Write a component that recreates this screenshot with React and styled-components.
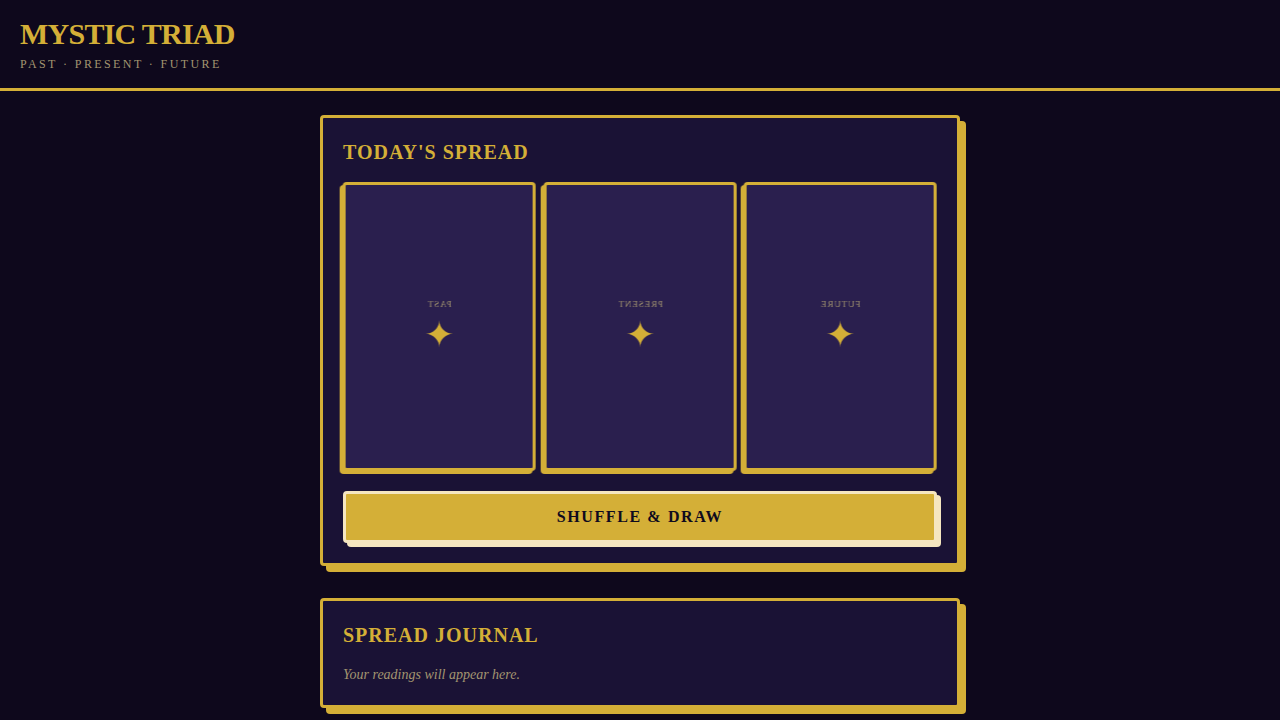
import styled, { createGlobalStyle } from "styled-components";

const POSITIONS = ["Past", "Present", "Future"];

const App = () => {
  return (
    <>
      <GlobalStyle />
      <Header>
        <h1>Mystic Triad</h1>
        <p>Past · Present · Future</p>
      </Header>

      <Main>
        <Panel>
          <PanelTitle>Today's Spread</PanelTitle>
          <Spread>
            {POSITIONS.map((position) => (
              <Card key={position}>
                <CardLabel>{position}</CardLabel>
                <CardSymbol>✦</CardSymbol>
              </Card>
            ))}
          </Spread>
          <DrawButton type="button">Shuffle &amp; Draw</DrawButton>
        </Panel>

        <Panel>
          <PanelTitle>Spread Journal</PanelTitle>
          <EmptyText>Your readings will appear here.</EmptyText>
        </Panel>
      </Main>
    </>
  );
};

const GlobalStyle = createGlobalStyle`
  * {
    box-sizing: border-box;
    margin: 0;
    padding: 0;
  }

  html {
    scrollbar-width: none;
  }

  body {
    background: #0e081c;
    color: #f5e6c0;
    font-family: "Liberation Serif", "DejaVu Sans", serif;
    line-height: 1.4;
  }
`;

const Header = styled.header`
  padding: 16px 20px;
  border-bottom: 3px solid #d4af37;

  h1 {
    color: #d4af37;
    font-size: 30px;
    line-height: 36px;
    letter-spacing: -0.025em;
    text-transform: uppercase;
  }

  p {
    margin-top: 4px;
    color: #a39570;
    font-size: 12px;
    line-height: 16px;
    letter-spacing: 0.2em;
    text-transform: uppercase;
  }
`;

const Main = styled.main`
  display: flex;
  flex-direction: column;
  gap: 32px;
  max-width: 640px;
  margin: 24px auto;
`;

const Panel = styled.section`
  padding: 20px;
  background: #1a1235;
  border: 3px solid #d4af37;
  border-radius: 4px;
  box-shadow: 6px 6px 0 #d4af37;
`;

const PanelTitle = styled.h2`
  margin-bottom: 16px;
  color: #d4af37;
  font-size: 20px;
  line-height: 28px;
  letter-spacing: 0.05em;
  text-transform: uppercase;
`;

const Spread = styled.div`
  display: grid;
  grid-template-columns: repeat(3, 1fr);
  gap: 8px;
  margin-bottom: 20px;
`;

const Card = styled.div`
  display: flex;
  flex-direction: column;
  align-items: center;
  justify-content: center;
  gap: 4px;
  aspect-ratio: 2 / 3;
  background: #2a1f4e;
  border: 3px solid #d4af37;
  border-radius: 4px;
  box-shadow: 3px 3px 0 #d4af37;
  transform: rotateY(180deg);
`;

const CardLabel = styled.span`
  color: #a39570;
  font-size: 9px;
  line-height: 13px;
  letter-spacing: 0.1em;
  text-transform: uppercase;
`;

const CardSymbol = styled.span`
  color: #d4af37;
  font-size: 36px;
  line-height: 40px;
`;

const DrawButton = styled.button`
  width: 100%;
  padding: 14px;
  background: #d4af37;
  color: #0f0a1e;
  border: 3px solid #f5e6c0;
  border-radius: 4px;
  box-shadow: 4px 4px 0 #f5e6c0;
  font-family: inherit;
  font-size: 16px;
  font-weight: 700;
  line-height: 18px;
  letter-spacing: 0.1em;
  text-transform: uppercase;
  cursor: pointer;
`;

const EmptyText = styled.p`
  color: #a39570;
  font-size: 14px;
  line-height: 20px;
  font-style: italic;
`;

export default App;
